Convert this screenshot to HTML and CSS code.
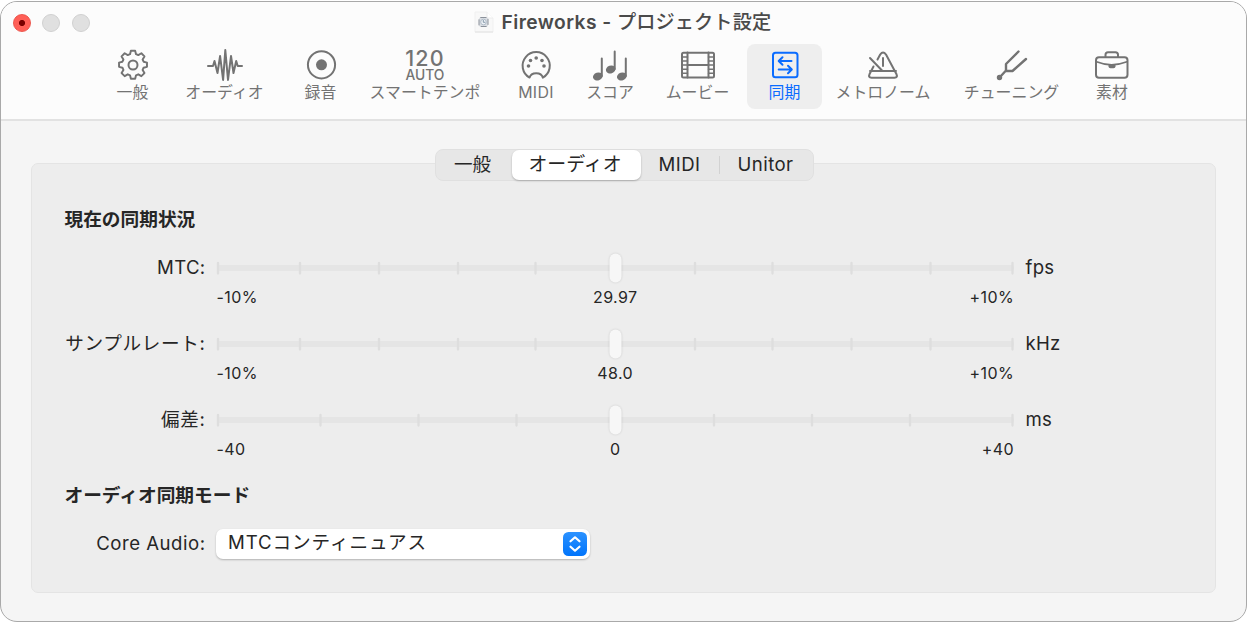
FILE: index.html
```html
<!DOCTYPE html>
<html lang="ja">
<head>
    <meta charset="utf-8">
    <title>Fireworks - プロジェクト設定</title>
    <link rel="stylesheet" href="styles.css">
</head>
<body>
<div class="window">

    <div class="header">
        <div class="titlebar">
            <div class="lights">
                <span class="light close"></span>
                <span class="light"></span>
                <span class="light"></span>
            </div>
            <svg class="docIcon" width="20" height="22" viewBox="0 0 20 22">
                <path d="M1 1h12l6 6v14H1z" fill="#f8f8f8" stroke="#f0f0f0"/>
                <path d="M1 21h18" stroke="#e2e2e2"/>
                <path d="M13 1v6h6" fill="#fff" stroke="#ececec"/>
                <rect x="5" y="6.500" width="9" height="9" rx="1.500" fill="#d9dde2" stroke="#8b919a" stroke-dasharray="6 2"/>
                <circle cx="9.500" cy="11" r="2.800" fill="#eef2f6" stroke="#a5b2c0" stroke-width=".8"/>
                <path d="M9.300 9v2.300h2" fill="none" stroke="#7c8ea0" stroke-width=".9"/>
            </svg>
            <h1 class="title">Fireworks - <span>プロジェクト設定</span></h1>
        </div>

        <div class="toolbar">
            <div class="tool">
                <svg width="32" height="32" viewBox="0 0 32 32">
                    <path d="M13.8 1.3h4.4l.9 3.5 2.3 1 3.2-1.9 3.2 3.2-1.9 3.2 1 2.3 3.5.9v4.4l-3.5.9-1 2.3 1.9 3.2-3.2 3.2-3.2-1.9-2.3 1-.9 3.5h-4.4l-.9-3.5-2.3-1-3.2 1.9-3.2-3.2 1.900-3.200-1-2.300-3.500-.9v-4.400l3.500-.9 1-2.300-1.900-3.200 3.200-3.200 3.200 1.900 2.300-1z" transform="translate(.5 .5) scale(.97)"/>
                    <circle cx="16" cy="16" r="4.500"/>
                </svg>
                <span>一般</span>
            </div>
            <div class="tool">
                <svg width="36" height="32" viewBox="0 0 36 32">
                    <path d="M1 17h5l1.500-5 3 12 2.600-17 3 24L18.300 1l2.700 30 3-24 2.500 17 2.700-12 1.500 5h4.300"/>
                </svg>
                <span>オーディオ</span>
            </div>
            <div class="tool">
                <svg width="32" height="32" viewBox="0 0 32 32">
                    <circle cx="16.500" cy="15.800" r="13.600"/>
                    <circle class="fill" cx="16.500" cy="15.800" r="5.500"/>
                </svg>
                <span>録音</span>
            </div>
            <div class="tool">
                <div class="tempo">
                    <b>120</b>
                    <i>AUTO</i>
                </div>
                <span>スマートテンポ</span>
            </div>
            <div class="tool">
                <svg width="32" height="32" viewBox="0 0 32 32">
                    <path d="M9.600 28.600A13.600 13.600 0 1 1 22.800 28.600C21.400 22.800 11 22.800 9.600 28.600z"/>
                    <circle class="fill" cx="8.500" cy="17" r="1.800"/>
                    <circle class="fill" cx="10.500" cy="11.500" r="1.800"/>
                    <circle class="fill" cx="16.200" cy="9" r="1.800"/>
                    <circle class="fill" cx="22" cy="11.500" r="1.800"/>
                    <circle class="fill" cx="24" cy="17" r="1.800"/>
                </svg>
                <span class="latin">MIDI</span>
            </div>
            <div class="tool">
                <svg width="36" height="32" viewBox="0 0 36 32">
                    <path d="M9.800 27V9.500M22.700 20V2.500M33.800 27V9.500"/>
                    <ellipse class="fill" cx="5.800" cy="27.500" rx="4.900" ry="3.900" transform="rotate(-18 5.800 27.500)"/>
                    <ellipse class="fill" cx="18.700" cy="20.500" rx="4.900" ry="3.900" transform="rotate(-18 18.700 20.500)"/>
                    <ellipse class="fill" cx="29.800" cy="27.500" rx="4.900" ry="3.900" transform="rotate(-18 29.800 27.500)"/>
                </svg>
                <span>スコア</span>
            </div>
            <div class="tool">
                <svg width="36" height="32" viewBox="0 0 36 32">
                    <rect x="2" y="3.700" width="32" height="24.800" rx="1.500"/>
                    <path d="M7.500 3.500v25M28.500 3.500v25M7.500 16.100h21"/>
                    <path d="M2 8h5.500M2 12h5.500M2 16.100h5.500M2 20.200h5.500M2 24.300h5.500M28.500 8h5.500M28.500 12h5.500M28.500 16.100h5.500M28.500 20.200h5.500M28.500 24.300h5.500" stroke-width="1.500"/>
                </svg>
                <span>ムービー</span>
            </div>
            <div class="tool selected">
                <svg width="32" height="32" viewBox="0 0 32 32">
                    <rect x="4" y="3.700" width="24.500" height="24.500" rx="2.500"/>
                    <path d="M22.500 12H9.800M13.500 8.200l-3.800 3.800 3.800 3.800M9.700 20.500h13M19 16.700l3.800 3.800-3.800 3.800"/>
                </svg>
                <span>同期</span>
            </div>
            <div class="tool">
                <svg width="32" height="32" viewBox="0 0 32 32">
                    <path d="M6.500 17.500L2.600 25Q1 28.700 4.500 28.700H27.500Q31 28.700 29.400 25L19 5.500Q16 1.500 13.200 5.500L10.500 10.500M3 22H29M3 9L15 21.500M16 9v8"/>
                </svg>
                <span>メトロノーム</span>
            </div>
            <div class="tool">
                <svg width="32" height="32" viewBox="0 0 32 32">
                    <path d="M22.500 2.500L10 15v6.500L4 28M10 22h6.500L30 10" stroke-width="2.400"/>
                    <circle class="fill" cx="3.500" cy="28.500" r="2.700"/>
                </svg>
                <span>チューニング</span>
            </div>
            <div class="tool">
                <svg width="36" height="32" viewBox="0 0 36 32">
                    <rect x="2" y="8.300" width="31.500" height="20.500" rx="3"/>
                    <path d="M11.500 7.800V5.800q0-2.500 2.500-2.500h7.500Q24 3.300 24 5.800v2"/>
                    <path d="M2.500 12.800q15 6 30.500 0" stroke-width="1.700"/>
                    <path class="fill" d="M14.500 15.800h7v1.500q0 2-2 2h-3q-2 0-2-2z"/>
                </svg>
                <span>素材</span>
            </div>
        </div>
    </div>

    <div class="content">
        <div class="panel">
            <div class="tabs">
                <span class="tab">一般</span>
                <span class="tab active">オーディオ</span>
                <span class="tab latin">MIDI</span>
                <span class="tab latin divided">Unitor</span>
            </div>

            <h2>現在の同期状況</h2>

            <div class="row">
                <label class="latin">MTC:</label>
                <svg class="slider" width="800" height="34" viewBox="0 0 800 34">
                    <rect class="track" x="2" y="14" width="797" height="6" rx="3"/>
                    <path class="ticks" d="M3 12v10.500M85 12v10.500M164 12v10.500M243 12v10.500M320.500 12v10.500M480 12v10.500M557.500 12v10.500M636.500 12v10.500M715.500 12v10.500M797.500 12v10.500"/>
                    <rect class="thumb" x="394.500" y="2.500" width="12" height="29" rx="6"/>
                </svg>
                <span class="unit">fps</span>
                <div class="values"><span>-10%</span><span>29.97</span><span>+10%</span></div>
            </div>

            <div class="row">
                <label class="kana">サンプルレート:</label>
                <svg class="slider" width="800" height="34" viewBox="0 0 800 34">
                    <rect class="track" x="2" y="14" width="797" height="6" rx="3"/>
                    <path class="ticks" d="M3 12v10.500M85 12v10.500M164 12v10.500M243 12v10.500M320.500 12v10.500M480 12v10.500M557.500 12v10.500M636.500 12v10.500M715.500 12v10.500M797.500 12v10.500"/>
                    <rect class="thumb" x="394.500" y="2.500" width="12" height="29" rx="6"/>
                </svg>
                <span class="unit">kHz</span>
                <div class="values"><span>-10%</span><span>48.0</span><span>+10%</span></div>
            </div>

            <div class="row">
                <label class="kana">偏差:</label>
                <svg class="slider" width="800" height="34" viewBox="0 0 800 34">
                    <rect class="track" x="2" y="14" width="797" height="6" rx="3"/>
                    <path class="ticks" d="M3 12v10.500M105.500 12v10.500M203.500 12v10.500M301.500 12v10.500M499 12v10.500M597 12v10.500M695 12v10.500M797.500 12v10.500"/>
                    <rect class="thumb" x="394.500" y="2.500" width="12" height="29" rx="6"/>
                </svg>
                <span class="unit">ms</span>
                <div class="values"><span>-40</span><span>0</span><span>+40</span></div>
            </div>

            <h2 class="mode">オーディオ同期モード</h2>

            <div class="row">
                <label class="device">Core Audio:</label>
                <div class="select">
                    <span>MTCコンティニュアス</span>
                    <svg width="24" height="24" viewBox="0 0 24 24">
                        <defs>
                            <linearGradient id="blue" x1="0" y1="0" x2="0" y2="1">
                                <stop offset="0" stop-color="#2c92ff"/>
                                <stop offset="1" stop-color="#0074fb"/>
                            </linearGradient>
                        </defs>
                        <rect width="24" height="24" rx="5.500" fill="url(#blue)"/>
                        <path d="M7.500 9.300L12 5.300l4.500 4M7.500 14.700l4.500 4 4.500-4" fill="none" stroke="#fff" stroke-width="2.200" stroke-linecap="round" stroke-linejoin="round"/>
                    </svg>
                </div>
            </div>
        </div>
    </div>

</div>
</body>
</html>
```
FILE: styles.css
```css
* { box-sizing: border-box; }
body {
    margin: 0;
    padding-top: 1px;
    height: 622px;
    overflow: hidden;
    background: #fff;
    font-family: Inter, "Noto Sans CJK JP", sans-serif;
    font-size: 18.6px;
    color: #262626;
}
h1, h2 { margin: 0; }
.window {
    width: 1247px;
    height: 621px;
    border: 1.5px solid #a9a9a9;
    border-radius: 17px;
    overflow: hidden;
    background: #f5f5f5;
}

/* Title bar */
.header {
    height: 119px;
    background: #fcfcfc;
    border-bottom: 2px solid #e2e2e2;
}
.titlebar {
    display: flex;
    height: 41.5px;
    padding-left: 12px;
}
.lights {
    display: flex;
    gap: 11.3px;
    width: 461px;
    padding-top: 12px;
}
.light {
    width: 18px;
    height: 18px;
    border: 1px solid #d0d0d0;
    border-radius: 50%;
    background: #e0e0e0;
}
.light.close {
    border-color: #ec544b;
    background: radial-gradient(circle, #790000 2.7px, #ff5f57 3.4px);
}
.docIcon { margin-top: 9px; }
.title {
    margin-left: 7.5px;
    font-size: 19.2px;
    line-height: 40px;
    font-weight: 600;
    letter-spacing: 0.45px;
    color: #4a4a4a;
    white-space: nowrap;
}
.title span {
    font-weight: 500;
    letter-spacing: 0.1px;
}

/* Toolbar */
.toolbar {
    display: grid;
    grid-template-columns: 51px 133px 59px 150px 72px 76px 99px 75px 122px 135px 66px;
    padding-left: 106px;
}
.tool {
    height: 65.5px;
    padding-top: 5.5px;
    text-align: center;
    font-size: 15.9px;
    line-height: 23px;
    color: #737373;
    white-space: nowrap;
}
.tool svg {
    display: block;
    margin: 0 auto;
    fill: none;
    stroke: currentColor;
    stroke-width: 2;
    stroke-linecap: round;
    stroke-linejoin: round;
}
.tool svg .fill {
    fill: currentColor;
    stroke: none;
}
.tool span { display: block; }
.tool.selected {
    border-radius: 8px;
    background: #eeeeee;
    color: #0a6cff;
}
.tempo {
    height: 32px;
}
.tempo b, .tempo i {
    display: block;
    font-style: normal;
}
.tempo b {
    font-size: 21.5px;
    line-height: 19px;
    font-weight: 500;
    letter-spacing: 1.2px;
}
.tempo i {
    font-size: 13.8px;
    line-height: 14px;
    font-weight: 500;
}

/* Panel */
.content { padding: 42px 29px 0 29.5px; }
.panel {
    width: 1185.5px;
    height: 430px;
    border: 1px solid #e4e4e4;
    border-radius: 7px;
    background: #ededed;
}
.tabs {
    display: grid;
    grid-template-columns: 76px 129px 78px 94px;
    width: 379px;
    height: 32px;
    margin: -15px 0 0 403px;
    border: 1px solid #e0e0e0;
    border-radius: 8px;
    background: #e7e7e7;
}
.tab {
    line-height: 29px;
    text-align: center;
}
.tab:first-child { padding-right: 2px; }
.tab.active {
    padding-right: 2px;
    border-radius: 7px;
    background: #fff;
    box-shadow: 0 1px 2px rgba(0, 0, 0, 0.25);
    font-size: 18.9px;
}
.tab.latin { letter-spacing: 0.45px; }
.tab.divided {
    background: linear-gradient(#d2d2d2, #d2d2d2) 0 50% / 1px 18px no-repeat;
}
h2 {
    margin: 25px 0 0 33px;
    font-size: 18.7px;
    line-height: 28px;
    font-weight: 700;
}

/* Slider rows */
.row {
    display: grid;
    grid-template-columns: 174px 800px 1fr;
    column-gap: 9.5px;
    height: 76px;
    grid-template-rows: 34px 26px;
}
h2 + .row { margin-top: 17px; }
h2.mode { margin-top: 3px; }
label {
    text-align: right;
    line-height: 33px;
    white-space: nowrap;
}
.kana { letter-spacing: 0.65px; }
.device { letter-spacing: 0.5px; }
.latin { letter-spacing: 0.3px; }
.unit {
    padding-left: 1px;
    line-height: 33px;
    letter-spacing: 0.3px;
}
.track { fill: #e5e5e5; }
.ticks {
    fill: none;
    stroke: #dedede;
    stroke-width: 2.3;
    stroke-linecap: round;
}
.thumb {
    fill: #f7f7f7;
    filter: drop-shadow(0 0.5px 1px rgba(0, 0, 0, 0.15));
}
.values {
    grid-column: 2;
    display: grid;
    grid-template-columns: 1fr 1fr 1fr;
    padding: 0 1px 0 1.5px;
    font-size: 16px;
    line-height: 24px;
    letter-spacing: 0.4px;
}
.values span:nth-child(2) { text-align: center; }
.values span:nth-child(3) { text-align: right; }

.select {
    display: flex;
    justify-content: space-between;
    align-items: center;
    width: 374px;
    height: 30px;
    margin: 2px 0 0 1px;
    padding: 0 3px 0 12px;
    border-radius: 7px;
    background: #fff;
    box-shadow: 0 1px 2px rgba(0, 0, 0, 0.25);
    line-height: 28px;
    letter-spacing: 0.9px;
}
.select span {
    height: 32px;
}
```
